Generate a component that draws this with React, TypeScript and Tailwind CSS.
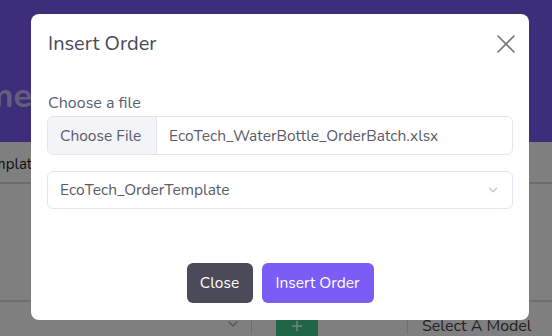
import { X, ChevronDown, Plus } from "lucide-react"

const font = { fontFamily: "Nunito, 'Open Sans', sans-serif" }

export default function App() {
  return (
    <div className="relative w-[552px] h-[336px] overflow-hidden bg-white" style={font}>
      {/* Page behind the dialog */}
      <div className="h-[142px] bg-[#7a5bf5] pt-[76px]">
        <div className="w-[32px] flex justify-end">
          <h1 className="shrink-0 whitespace-nowrap text-[34px] font-bold leading-[40px] text-white/60">Welcome</h1>
        </div>
      </div>
      <div className="h-[42px] border-b-2 border-[#d8d8d8] flex items-center pt-[4px]">
        <div className="w-[40px] flex justify-end">
          <span className="shrink-0 whitespace-nowrap text-[15px] text-[#222]">Template</span>
        </div>
      </div>
      <div className="h-[118px] border-b-2 border-[#dcdcdc]" />
      <div className="flex h-[32px]">
        <div className="w-[252px] border-r border-[#dcdcdc] flex justify-end items-start pr-[10px] pt-[14px]">
          <ChevronDown className="w-4 h-4 text-[#aaa]" />
        </div>
        <div className="w-[156px] border-r border-[#dcdcdc] flex pl-[24px] pt-[14px]">
          <div className="w-[42px] h-[30px] bg-[#3fcb8f] flex justify-center pt-[2px]">
            <Plus className="w-4 h-4 text-white" />
          </div>
        </div>
        <div className="pl-[14px] pt-[12px] text-[16px] text-[#444]">Select A Model</div>
      </div>

      {/* Overlay */}
      <div className="absolute inset-0 bg-black/50" />

      {/* Dialog */}
      <div className="absolute left-[31px] top-[14px] w-[498px] h-[306px] bg-white rounded-[8px] flex flex-col">
        <div className="h-[60px] pl-[17px] pr-[7px] flex items-center justify-between">
          <h2 className="text-[20px] leading-[28px] text-[#4a4a56]">Insert Order</h2>
          <X className="w-[32px] h-[32px] text-[#777]" strokeWidth={1.25} />
        </div>
        <div className="px-[16px] pt-[18px]">
          <label className="block text-[16px] leading-[22px] text-[#5a6272] mb-[2px] pl-px">Choose a file</label>
          <div className="flex h-[39px] border border-[#e3e6f0] rounded-[6px] overflow-hidden text-[15.5px] text-[#5a5c69]">
            <div className="w-[109px] bg-[#f3f4f7] border-r border-[#e3e6f0] flex items-center pl-[12px]">Choose File</div>
            <div className="flex items-center pl-[12px]">EcoTech_WaterBottle_OrderBatch.xlsx</div>
          </div>
          <div className="mt-[16px] flex h-[38px] items-center justify-between border border-[#e3e6f0] rounded-[6px] pl-[12px] pr-[12px] text-[15.5px] text-[#5a5c69]">
            <span>EcoTech_OrderTemplate</span>
            <ChevronDown className="w-[14px] h-[14px] text-[#c5c9d2]" strokeWidth={2.5} />
          </div>
        </div>
        <div className="mt-auto pb-[17px] flex justify-center gap-[9px]">
          <button className="w-[66px] h-[40px] rounded-[6px] bg-[#4b4a59] text-white text-[15.5px]">Close</button>
          <button className="w-[112px] h-[40px] rounded-[6px] bg-[#7b5cf5] text-white text-[15.5px]">Insert Order</button>
        </div>
      </div>
    </div>
  )
}
